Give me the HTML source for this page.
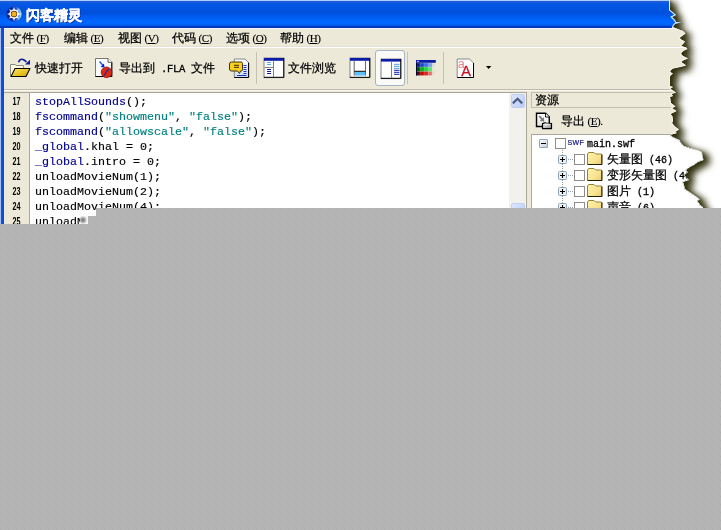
<!DOCTYPE html>
<html><head><meta charset="utf-8">
<style>
html,body{margin:0;padding:0;width:721px;height:530px;overflow:hidden;background:#fff;}
*{box-sizing:border-box;}
.a{position:absolute;}
#wrap{position:absolute;left:0;top:0;width:721px;height:230px;filter:drop-shadow(5px 3px 3.5px rgba(45,45,10,1)) drop-shadow(2px 1px 1px rgba(45,45,10,0.6));}
#win{position:absolute;left:0;top:0;width:721px;height:230px;background:#ece9d8;overflow:hidden;
font-family:"Liberation Sans",sans-serif;font-size:12px;color:#000;
clip-path:polygon(0 0,670px 0px,670px 10px,672px 11.5px,676px 15px,672px 17px,675px 20px,676px 22px,681.5px 22.5px,676px 23.5px,675px 24px,674px 25px,673px 27px,675px 28px,679px 29.5px,683px 31px,685.5px 33.5px,682px 36px,679.5px 38px,682px 40px,685px 41.5px,683px 44px,681px 46px,686px 47.5px,687.5px 49px,685px 50px,682px 52px,681px 54px,683px 56px,688px 58.5px,684px 60px,681px 62px,683.5px 63.5px,686px 65.5px,680px 67px,673px 68.5px,671px 70px,670px 72px,673px 73.5px,671px 75px,670px 76.5px,670px 86px,673px 87px,670.5px 88.5px,672px 90px,676px 92.5px,671.5px 94px,673px 96px,670px 97px,671px 103px,675.5px 106.5px,672px 108px,676.5px 111px,670.5px 114px,672.5px 116.5px,673px 121px,672px 123px,675px 126.5px,679px 129.5px,675px 132px,677px 133px,671.5px 134.5px,671px 136px,675px 138px,679.5px 140px,681px 143px,684px 146px,690px 148px,698px 150px,702px 152px,702.5px 156px,703.5px 160px,698px 162px,694px 165px,690px 167px,686px 170px,688px 172.5px,684px 175px,685px 176px,689px 180px,683px 182px,684px 185px,685px 189px,688px 191px,691px 193px,694px 195px,697px 197px,700px 199.5px,697px 201px,699px 203px,700px 205px,703px 207px,705px 230px,0px 230px);}
#title{left:0;top:0;width:721px;height:29px;background:linear-gradient(#a8ccff 0px,#a8ccff 1px,#2860d0 1px,#0a58e4 3px,#0054e0 8px,#0050dc 13px,#005cf0 17px,#0064fc 20px,#0066ff 24px,#0058e8 25.5px,#003cbc 26.5px,#0034b0 28px,#f4f6ff 28px);}
#lb{left:0;top:28px;width:4px;height:210px;background:linear-gradient(90deg,#a6c0f0 0,#a6c0f0 1px,#1a50d8 1px,#0a46d8 4px);}
.m{top:32px;height:12px;line-height:12px;font-size:12px;white-space:nowrap;-webkit-text-stroke:0.25px #000;}
.p{font-family:"Liberation Serif",serif;font-size:11px;letter-spacing:-0.4px;margin-left:2.5px;-webkit-text-stroke:0.15px #000;}
.q{font-family:"Liberation Mono",monospace;font-size:10px;margin-left:6px;-webkit-text-stroke:0.3px #000;}
.p u{text-underline-offset:1px;}
.code{font-family:"Liberation Mono",monospace;font-size:11.67px;line-height:15px;white-space:pre;color:#000;-webkit-text-stroke:0.15px currentColor;}
.kw{color:#000090;}
.str{color:#008080;}
.ln{font-family:"Liberation Sans",sans-serif;font-size:10px;font-weight:bold;line-height:15px;width:25px;text-align:center;transform:scaleX(0.72);transform-origin:16.2px 0;}
svg{position:absolute;overflow:visible;}
</style></head><body>
<div id="wrap"><div id="win">
  <div id="title" class="a"></div>
  <div id="lb" class="a"></div>
  <!-- title icon -->
  <svg style="left:6px;top:6px" width="16" height="16" viewBox="0 0 16 16">
    <defs><linearGradient id="ti" x1="0" x2="1" y1="0" y2="0"><stop offset="0" stop-color="#0a1890"/><stop offset="0.55" stop-color="#1038b8"/><stop offset="1" stop-color="#a8ecf8"/></linearGradient></defs>
    <circle cx="8" cy="8" r="7.6" fill="url(#ti)"/>
    <g fill="#fff">
      <path d="M8 0.8 L9 4 L7 4Z M8 15.2 L9 12 L7 12Z M0.8 8 L4 9 L4 7Z M15.2 8 L12 9 L12 7Z"/>
      <path d="M2.9 2.9 L5.5 4.4 L4.4 5.5Z M13.1 13.1 L10.5 11.6 L11.6 10.5Z M2.9 13.1 L4.4 10.5 L5.5 11.6Z M13.1 2.9 L11.6 5.5 L10.5 4.4Z"/>
      <circle cx="8" cy="8" r="4.6"/>
    </g>
    <circle cx="8" cy="8" r="3.2" fill="#4a3010"/>
    <circle cx="8" cy="8" r="2.5" fill="#f4b020"/>
  </svg>
  <div class="a" style="left:25.6px;top:7.6px;text-shadow:1px 1px 0 #0a2c90;color:#fff;font-weight:bold;font-size:13.5px;line-height:15px;-webkit-text-stroke:0.5px #fff;letter-spacing:0px">闪客精灵</div>
  <!-- menu -->
  <div class="a m" style="left:10px">文件<span class="p">(<u>F</u>)</span></div>
  <div class="a m" style="left:64px">编辑<span class="p">(<u>E</u>)</span></div>
  <div class="a m" style="left:118px">视图<span class="p">(<u>V</u>)</span></div>
  <div class="a m" style="left:172px">代码<span class="p">(<u>C</u>)</span></div>
  <div class="a m" style="left:226px">选项<span class="p">(<u>O</u>)</span></div>
  <div class="a m" style="left:280px">帮助<span class="p">(<u>H</u>)</span></div>
  <div class="a" style="left:4px;top:46px;width:717px;height:1px;background:#e4e1d2"></div>
  <div class="a" style="left:4px;top:47px;width:717px;height:1px;background:#fff"></div>

  <!-- toolbar -->
  <!-- open folder icon -->
  <svg style="left:6px;top:54px" width="28" height="26" viewBox="0 0 28 26">
    <defs><linearGradient id="fy" x1="0" y1="0" x2="1" y2="1"><stop offset="0" stop-color="#fbe870"/><stop offset="0.6" stop-color="#e8c020"/><stop offset="1" stop-color="#c89a00"/></linearGradient></defs>
    <path d="M4.5 22.5 L4.5 10.5 L9.5 10.5 L10 11.5 L17.5 11.5 L17.5 15" fill="#fdfbe6" stroke="#8c8c84" stroke-width="1"/>
    <path d="M9 14.5 L24 14.5 L20 22.5 L5 22.5 Z" fill="url(#fy)" stroke="#000" stroke-width="1.1" stroke-linejoin="round"/>
    <path d="M12.5 8.2 Q14 4.5 17 5.5 Q19 6.3 20.5 8" fill="none" stroke="#0a1a9a" stroke-width="1.6"/>
    <path d="M19 10.5 L24 5.8 L24 10.5 Z" fill="#0a1a9a"/>
  </svg>
  <div class="a m" style="left:35px;top:62px">快速打开</div>
  <!-- export FLA icon -->
  <svg style="left:92px;top:54px" width="28" height="28" viewBox="0 0 28 28">
    <path d="M3.5 22.5 L3.5 4.5 L16 4.5 L19.8 8.3 L19.8 22.5 Z" fill="#fff" stroke="#777" stroke-width="1"/>
    <path d="M19.8 8.3 L19.8 22.5 L3.5 22.5" fill="none" stroke="#000" stroke-width="1"/>
    <path d="M16 4.5 L16 8.3 L19.8 8.3" fill="#fff" stroke="#333" stroke-width="0.8"/>
    <path d="M7.5 7.5 L11 11.5" stroke="#3060e0" stroke-width="1.6"/>
    <path d="M12.5 13.5 L8.5 13 L12 9.5 Z" fill="#0a20d0"/>
    <circle cx="14.5" cy="18.3" r="5.3" fill="#e02814" stroke="#8a1008" stroke-width="0.8"/>
    <path d="M12.3 21.5 L14.5 17.5 L17 15" stroke="#203090" stroke-width="1.3" fill="none"/>
  </svg>
  <div class="a m" style="left:119px;top:62px">导出到<span class="q" style="margin-left:0;font-size:10.5px;letter-spacing:-0.3px">&nbsp;.FLA&nbsp;</span>文件</div>
  <!-- chat/doc icon -->
  <svg style="left:224px;top:54px" width="28" height="28" viewBox="0 0 28 28">
    <defs><linearGradient id="dg" x1="0" y1="0" x2="0" y2="1"><stop offset="0" stop-color="#fff"/><stop offset="1" stop-color="#c8ddf4"/></linearGradient></defs>
    <path d="M10.3 23.5 L10.3 5 L21 5 L24.6 8.6 L24.6 23.5 Z" fill="url(#dg)" stroke="#888" stroke-width="1"/>
    <path d="M24.6 8.6 L24.6 23.5 L10.3 23.5" fill="none" stroke="#000" stroke-width="1"/>
    <g stroke="#2030c0" stroke-width="1"><path d="M19.5 11.5H22.5M19.5 13.5H22.5M19.5 15.5H22.5M19.5 17.5H22.5M19.5 19.5H22.5M13 21.5H22.5"/></g>
    <path d="M7.5 8 L17 8 Q18.5 8 18.5 9.5 L18.5 15.5 Q18.5 17 17 17 L16.5 17 L15.5 19.5 L13.5 17 L7.5 17 Q5.5 17 5.5 15 L5.5 10 Q5.5 8 7.5 8 Z" fill="#f8d020" stroke="#403010" stroke-width="1"/>
    <path d="M10 11.3H15M10 13.3H15" stroke="#402808" stroke-width="1"/>
  </svg>
  <div class="a" style="left:256px;top:52px;width:1px;height:32px;background:#c5c2b2"></div>
  <!-- file browser icon -->
  <svg style="left:260px;top:54px" width="28" height="28" viewBox="0 0 28 28">
    <rect x="4" y="4" width="19.8" height="19.6" fill="#fff" stroke="#808080" stroke-width="1"/>
    <rect x="4" y="4" width="19.8" height="2.8" fill="#0c1ca8"/>
    <path d="M4 23.3H23.8V4" fill="none" stroke="#000" stroke-width="1"/>
    <path d="M13.5 6.8V23M4.5 13.5H13.5" stroke="#808080" stroke-width="1"/>
    <path d="M7 8.5H11M7 10.5H11" stroke="#58b0d0" stroke-width="1"/>
    <path d="M7 15.5H11M7 17.5H11M7 19.5H11" stroke="#0c1ca0" stroke-width="1"/>
  </svg>
  <div class="a m" style="left:288px;top:62px">文件浏览</div>
  <!-- window icon 2 -->
  <svg style="left:346px;top:54px" width="28" height="28" viewBox="0 0 28 28">
    <rect x="4" y="4" width="19.8" height="19.6" fill="#fff" stroke="#808080" stroke-width="1"/>
    <rect x="4" y="4" width="19.8" height="2.8" fill="#0c1ca8"/>
    <path d="M4 23.3H23.8V4" fill="none" stroke="#000" stroke-width="1"/>
    <rect x="8.5" y="17.8" width="11" height="3.8" fill="#60c0ff"/>
    <path d="M8.2 6.8V21.5M19.5 6.8V21.5" stroke="#707070" stroke-width="1.1"/>
    <path d="M8.2 17.3H19.5" stroke="#000" stroke-width="1"/>
  </svg>
  <!-- pressed button -->
  <div class="a" style="left:375px;top:50px;width:30px;height:36px;border:1px solid #a4b4c4;border-radius:3px;background:#fafaf7"></div>
  <svg style="left:372px;top:48px" width="38" height="40" viewBox="0 0 38 40">
    <rect x="9" y="11" width="19.8" height="19.6" fill="#fff" stroke="#808080" stroke-width="1"/>
    <rect x="9" y="11" width="19.8" height="2.6" fill="#0c1ca8"/>
    <path d="M9 30.3H28.8V11" fill="none" stroke="#000" stroke-width="1"/>
    <path d="M19.5 13.5V30" stroke="#808080" stroke-width="1"/>
    <path d="M22 16.3H27.5M22 18.3H27.5M22 20.3H27.5" stroke="#4aa0d8" stroke-width="1"/>
    <path d="M22 22.3H27.5M22 24.3H27.5M22 26.3H27.5" stroke="#1020b0" stroke-width="1"/>
  </svg>
  <div class="a" style="left:407px;top:52px;width:1px;height:32px;background:#c5c2b2"></div>
  <!-- color grid icon -->
  <svg style="left:412px;top:54px" width="28" height="28" viewBox="0 0 28 28">
    <rect x="4" y="6" width="19.8" height="2.8" fill="#0c1ca8"/><rect x="5" y="6.8" width="2" height="1" fill="#c0d0ff"/>
    <rect x="4.2" y="9.3" width="3.6" height="3.4" fill="#0a1e80" opacity="1"/><rect x="4" y="9" width="4.0" height="4" fill="#0a1e80" opacity="0.55"/><rect x="8.2" y="9.3" width="3.6" height="3.4" fill="#1e48c8" opacity="1"/><rect x="8" y="9" width="4.0" height="4" fill="#1e48c8" opacity="0.55"/><rect x="12.2" y="9.3" width="3.6" height="3.4" fill="#3a6ee0" opacity="0.95"/><rect x="12" y="9" width="4.0" height="4" fill="#3a6ee0" opacity="0.5225"/><rect x="16.2" y="9.3" width="3.6" height="3.4" fill="#5a8cf0" opacity="0.7"/><rect x="16" y="9" width="4.0" height="4" fill="#5a8cf0" opacity="0.385"/><rect x="20.2" y="9.3" width="2" height="3.4" fill="#a8c0f4" opacity="0.35"/><rect x="4.2" y="13.3" width="3.6" height="3.9" fill="#005010" opacity="1"/><rect x="4" y="13" width="4.0" height="4.5" fill="#005010" opacity="0.55"/><rect x="8.2" y="13.3" width="3.6" height="3.9" fill="#10a820" opacity="1"/><rect x="8" y="13" width="4.0" height="4.5" fill="#10a820" opacity="0.55"/><rect x="12.2" y="13.3" width="3.6" height="3.9" fill="#20d040" opacity="0.95"/><rect x="12" y="13" width="4.0" height="4.5" fill="#20d040" opacity="0.5225"/><rect x="16.2" y="13.3" width="3.6" height="3.9" fill="#40e060" opacity="0.7"/><rect x="16" y="13" width="4.0" height="4.5" fill="#40e060" opacity="0.385"/><rect x="20.2" y="13.3" width="2" height="3.9" fill="#a8f0b8" opacity="0.35"/><rect x="4.2" y="17.8" width="3.6" height="3.4" fill="#580808" opacity="1"/><rect x="4" y="17.5" width="4.0" height="4" fill="#580808" opacity="0.55"/><rect x="8.2" y="17.8" width="3.6" height="3.4" fill="#b81010" opacity="1"/><rect x="8" y="17.5" width="4.0" height="4" fill="#b81010" opacity="0.55"/><rect x="12.2" y="17.8" width="3.6" height="3.4" fill="#e02020" opacity="0.95"/><rect x="12" y="17.5" width="4.0" height="4" fill="#e02020" opacity="0.5225"/><rect x="16.2" y="17.8" width="3.6" height="3.4" fill="#e05858" opacity="0.7"/><rect x="16" y="17.5" width="4.0" height="4" fill="#e05858" opacity="0.385"/><rect x="20.2" y="17.8" width="2" height="3.4" fill="#f0b0b0" opacity="0.35"/>
    <rect x="4" y="8.8" width="1" height="12.7" fill="#000030"/>
  </svg>
  <div class="a" style="left:443px;top:52px;width:1px;height:32px;background:#c5c2b2"></div>
  <!-- font icon -->
  <svg style="left:452px;top:54px" width="44" height="28" viewBox="0 0 44 28">
    <path d="M5.2 23.5 L5.2 5 L17.5 5 L21.5 9 L21.5 23.5 Z" fill="#fff" stroke="#888" stroke-width="1"/>
    <path d="M21.5 9 L21.5 23.5 L5.2 23.5" fill="none" stroke="#000" stroke-width="1"/>
    <text x="5.8" y="13.5" font-family="Liberation Sans" font-size="12.5" fill="#f07c84">a</text>
    <text x="9.3" y="22" font-family="Liberation Sans" font-size="14.5" fill="#c41424" stroke="#c41424" stroke-width="0.3">A</text>
    <path d="M34 12 L39.3 12 L36.65 15 Z" fill="#000"/>
  </svg>

  <!-- editor frame -->
  <div class="a" style="left:4px;top:89px;width:717px;height:1px;background:#bfbcae"></div>
  <div class="a" style="left:4px;top:90px;width:717px;height:1px;background:#f8f6f0"></div>
  <div class="a" style="left:4px;top:92px;width:523px;height:1px;background:#aca899"></div>
  <!-- gutter -->
  <div class="a" style="left:29px;top:93px;width:1px;height:140px;background:#aca899"></div>
  <div class="a" style="left:30px;top:93px;width:479px;height:140px;background:#fff"></div>
  <!-- scrollbar -->
  <div class="a" style="left:509px;top:93px;width:17px;height:140px;background:#f3f1ec"></div>
  <div class="a" style="left:526px;top:92px;width:1px;height:140px;background:#aca899"></div>
  <div class="a" style="left:511px;top:94px;width:14px;height:14px;border-radius:2px;background:linear-gradient(135deg,#dde6fd,#b9cbf7);border:1px solid #c0cef4"></div>
  <svg style="left:511px;top:94px" width="14" height="14"><path d="M2.6 8.6 L6.5 4.7 L10.4 8.6" stroke="#4d6185" stroke-width="2.2" fill="none" stroke-linecap="square"/></svg>
  <div class="a" style="left:511px;top:203px;width:14px;height:14px;border-radius:2px;background:linear-gradient(135deg,#dde6fd,#b9cbf7);border:1px solid #c0cef4"></div>

  <div class="a ln" style="left:3px;top:93.5px">17<br>18<br>19<br>20<br>21<br>22<br>23<br>24<br>25</div>
  <div class="a code" style="left:35px;top:94.5px"><span class="kw">stopAllSounds</span>();
<span class="kw">fscommand</span>(<span class="str">"showmenu"</span>, <span class="str">"false"</span>);
<span class="kw">fscommand</span>(<span class="str">"allowscale"</span>, <span class="str">"false"</span>);
<span class="kw">_global</span>.khal = 0;
<span class="kw">_global</span>.intro = 0;
unloadMovieNum(1);
unloadMovieNum(2);
unloadMovieNum(4);
unloadMovieNum(5);</div>

  <!-- resource panel -->
  <div class="a" style="left:531px;top:92px;width:200px;height:16px;border:1px solid #c2bfb0;border-right:none"></div>
  <div class="a m" style="left:535px;top:94px">资源</div>
  <svg style="left:530px;top:108px" width="28" height="26" viewBox="0 0 28 26">
    <defs><linearGradient id="tr" x1="0" y1="0" x2="1" y2="1"><stop offset="0" stop-color="#f4f4f4"/><stop offset="0.5" stop-color="#c8c8c8"/><stop offset="1" stop-color="#808080"/></linearGradient>
    <linearGradient id="dd" x1="0" y1="0" x2="0" y2="1"><stop offset="0" stop-color="#fff"/><stop offset="1" stop-color="#e4e4e4"/></linearGradient></defs>
    <path d="M6.5 18.5 L6.5 5.2 L15.5 5.2 L19.3 9 L19.3 18.5 Z" fill="url(#dd)" stroke="#000" stroke-width="1.4"/>
    <path d="M15.5 5.2 L15.5 9 L19.3 9" fill="#fff" stroke="#000" stroke-width="0.9"/>
    <path d="M9.3 8 L12.6 11.8" stroke="#7a7a7a" stroke-width="1.8"/>
    <path d="M14.3 13.6 L9.8 13 L13.7 9.2 Z" fill="#7a7a7a"/>
    <path d="M12.5 15.8 Q14 14.6 16 15 L21.5 15.5 L21.5 20.6 L12.5 20.6 Z" fill="url(#tr)" stroke="#000" stroke-width="1.2"/>
    <path d="M14.5 16.2 L19.5 16.2" stroke="#fff" stroke-width="0.8"/>
  </svg>
  <div class="a m" style="left:561px;top:115px">导出<span class="p">(<u>E</u>).</span></div>
  <div class="a" style="left:531px;top:134px;width:200px;height:100px;background:#fff;border-left:1px solid #aca899;border-top:1px solid #aca899"></div>
  <!-- tree -->
  <div class="a" style="left:539px;top:139px;width:9px;height:9px;border:1px solid #8ca4b8;border-radius:1px;background:linear-gradient(135deg,#fff,#c4cfdc)"></div>
  <div class="a" style="left:541px;top:143px;width:5px;height:1px;background:#000"></div>
  <div class="a" style="left:555px;top:138px;width:11px;height:11px;border:1px solid #8c8c8c;background:#fff"></div>
  <div class="a" style="left:567.5px;top:138.5px;font-family:'Liberation Sans',sans-serif;font-size:7px;color:#10108a;line-height:8px;letter-spacing:0.4px;-webkit-text-stroke:0.2px #10108a">SWF</div>
  <div class="a m" style="left:587px;top:139px;font-family:'Liberation Mono',monospace;font-size:10px;-webkit-text-stroke:0.3px #000">main.swf</div>
  <svg style="left:554px;top:150px" width="60" height="70" viewBox="0 0 60 70">
    <defs><linearGradient id="fo" x1="0" y1="0" x2="1" y2="1"><stop offset="0" stop-color="#fcf0b0"/><stop offset="0.6" stop-color="#f8e490"/><stop offset="1" stop-color="#e8c870"/></linearGradient></defs>
    <path d="M8.5 0V56" stroke="#a0a0a0" stroke-width="1" stroke-dasharray="1 1"/>
    <g>
    <rect x="4.5" y="5.5" width="8" height="8" rx="1" fill="#eef0f4" stroke="#8ca4b8"/>
    <path d="M6 9.5H11M8.5 7V12" stroke="#000" stroke-width="1.1"/>
    <path d="M14 9.5H19" stroke="#a0a0a0" stroke-dasharray="1 1"/>
    <rect x="20.5" y="4.5" width="10" height="10" fill="#fff" stroke="#8c8c8c"/>
    <path d="M33.5 14.5V4 L34.5 2.5 L40 2.5 L41.5 4 L47.5 4 L47.5 14.5Z" fill="url(#fo)" stroke="#a08030" stroke-width="1"/>
    <path d="M33.5 14.5H48V4.5" fill="none" stroke="#202000" stroke-width="1"/>
    </g><g transform="translate(0 16)">
    <rect x="4.5" y="5.5" width="8" height="8" rx="1" fill="#eef0f4" stroke="#8ca4b8"/>
    <path d="M6 9.5H11M8.5 7V12" stroke="#000" stroke-width="1.1"/>
    <path d="M14 9.5H19" stroke="#a0a0a0" stroke-dasharray="1 1"/>
    <rect x="20.5" y="4.5" width="10" height="10" fill="#fff" stroke="#8c8c8c"/>
    <path d="M33.5 14.5V4 L34.5 2.5 L40 2.5 L41.5 4 L47.5 4 L47.5 14.5Z" fill="url(#fo)" stroke="#a08030" stroke-width="1"/>
    <path d="M33.5 14.5H48V4.5" fill="none" stroke="#202000" stroke-width="1"/>
    </g><g transform="translate(0 32)">
    <rect x="4.5" y="5.5" width="8" height="8" rx="1" fill="#eef0f4" stroke="#8ca4b8"/>
    <path d="M6 9.5H11M8.5 7V12" stroke="#000" stroke-width="1.1"/>
    <path d="M14 9.5H19" stroke="#a0a0a0" stroke-dasharray="1 1"/>
    <rect x="20.5" y="4.5" width="10" height="10" fill="#fff" stroke="#8c8c8c"/>
    <path d="M33.5 14.5V4 L34.5 2.5 L40 2.5 L41.5 4 L47.5 4 L47.5 14.5Z" fill="url(#fo)" stroke="#a08030" stroke-width="1"/>
    <path d="M33.5 14.5H48V4.5" fill="none" stroke="#202000" stroke-width="1"/>
    </g><g transform="translate(0 48)">
    <rect x="4.5" y="5.5" width="8" height="8" rx="1" fill="#eef0f4" stroke="#8ca4b8"/>
    <path d="M6 9.5H11M8.5 7V12" stroke="#000" stroke-width="1.1"/>
    <path d="M14 9.5H19" stroke="#a0a0a0" stroke-dasharray="1 1"/>
    <rect x="20.5" y="4.5" width="10" height="10" fill="#fff" stroke="#8c8c8c"/>
    <path d="M33.5 14.5V4 L34.5 2.5 L40 2.5 L41.5 4 L47.5 4 L47.5 14.5Z" fill="url(#fo)" stroke="#a08030" stroke-width="1"/>
    <path d="M33.5 14.5H48V4.5" fill="none" stroke="#202000" stroke-width="1"/>
    </g>
  </svg>
  <div class="a m" style="left:607px;top:153px">矢量图<span class="q">(46)</span></div>
  <div class="a m" style="left:607px;top:169px">变形矢量图<span class="q">(46)</span></div>
  <div class="a m" style="left:607px;top:185px">图片<span class="q">(1)</span></div>
  <div class="a m" style="left:607px;top:201px">声音<span class="q">(6)</span></div>
<svg style="left:0;top:0" width="721" height="230"><polyline points="670.0,0.0 670.0,10.0 672.0,11.5 676.0,15.0 672.0,17.0 675.0,20.0 676.0,22.0 681.5,22.5 676.0,23.5 675.0,24.0 674.0,25.0 673.0,27.0 675.0,28.0" fill="none" stroke="#e8f0ff" stroke-width="2"/><polyline points="673.0,27.0 675.0,28.0 679.0,29.5 683.0,31.0 685.5,33.5 682.0,36.0 679.5,38.0 682.0,40.0 685.0,41.5 683.0,44.0 681.0,46.0 686.0,47.5 687.5,49.0 685.0,50.0 682.0,52.0 681.0,54.0 683.0,56.0 688.0,58.5 684.0,60.0 681.0,62.0 683.5,63.5 686.0,65.5 680.0,67.0 673.0,68.5 671.0,70.0 670.0,72.0 673.0,73.5 671.0,75.0 670.0,76.5 670.0,86.0 673.0,87.0 670.5,88.5 672.0,90.0 676.0,92.5 671.5,94.0 673.0,96.0 670.0,97.0 671.0,103.0 675.5,106.5 672.0,108.0 676.5,111.0 670.5,114.0 672.5,116.5 673.0,121.0 672.0,123.0 675.0,126.5 679.0,129.5 675.0,132.0 677.0,133.0 671.5,134.5" fill="none" stroke="#f8f6ee" stroke-width="1.6"/><polyline points="671.5,134.5 671.0,136.0 675.0,138.0 679.5,140.0 681.0,143.0 684.0,146.0 690.0,148.0 698.0,150.0 702.0,152.0 702.5,156.0 703.5,160.0 698.0,162.0 694.0,165.0 690.0,167.0 686.0,170.0 688.0,172.5 684.0,175.0 685.0,176.0 689.0,180.0 683.0,182.0 684.0,185.0 685.0,189.0 688.0,191.0 691.0,193.0 694.0,195.0 697.0,197.0 700.0,199.5 697.0,201.0 699.0,203.0 700.0,205.0 703.0,207.0" fill="none" stroke="#b8b8b8" stroke-width="1.4" stroke-dasharray="2 1"/></svg>
</div></div>
<!-- gray overlay -->
<div class="a" style="left:80px;top:216px;width:8px;height:8px;background:radial-gradient(ellipse 4px 4px at 3px 4px,#6a6a6a,#bdbdbd 70%,#f4f4f4)"></div>
<svg class="a" style="left:0;top:208px" width="721" height="322"><defs><pattern id="dots" x="0" y="0" width="8" height="8" patternUnits="userSpaceOnUse"><rect width="8" height="8" fill="#b4b4b4"/><rect x="0" y="0" width="1" height="1" fill="#acacac"/><rect x="1" y="0" width="1" height="1" fill="#b1b1b1"/><rect x="0" y="1" width="1" height="1" fill="#b1b1b1"/></pattern></defs><path d="M96 0H721V322H0V16H88V8H96Z" fill="url(#dots)"/></svg>
</body></html>
